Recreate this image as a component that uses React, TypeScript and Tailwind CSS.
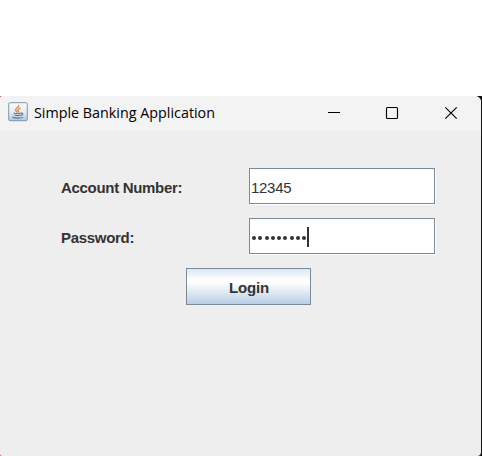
import type { ReactNode } from "react";

function JavaIcon() {
  return (
    <svg width="20" height="20" viewBox="0 0 20 20" className="shrink-0" fill="none">
      <defs>
        <linearGradient id="tile" x1="0" y1="0" x2="0" y2="1">
          <stop offset="0" stopColor="#fbfcfd" />
          <stop offset="0.5" stopColor="#e8edf1" />
          <stop offset="1" stopColor="#b4c9da" />
        </linearGradient>
      </defs>
      <rect x="0.7" y="0.7" width="18.6" height="18" rx="1.5" fill="url(#tile)" stroke="#7f97a9" />
      <path d="M10.8 3C11.5 5.2 6.8 6.2 7.5 8.1C7.9 9 8.8 9.5 9.1 10.6M12.6 5.8C10.5 6.8 9 7.6 10.2 9C10.6 9.6 10.3 10 10 10.6" stroke="#e28a45" strokeWidth="1.4" />
      <path d="M5.6 11.1C7.5 12 11.5 11.8 12.9 11.1M6.6 12.9C8.3 13.7 11 13.6 12.4 12.9M12.9 11.2C15.5 10.6 15.2 12.9 12.8 13.5M4.8 14.5C3.6 16.4 13.7 16.7 14.8 15" stroke="#56799a" strokeWidth="1.15" />
    </svg>
  );
}

function Field({ children }: { children: ReactNode }) {
  return (
    <div className="flex h-9 w-[186px] items-center border border-[#7a8a99] bg-white shadow-[1px_1px_0_#ffffff]">
      {children}
    </div>
  );
}

export default function App() {
  return (
    <div className="h-[456px] w-[482px] overflow-hidden bg-white pt-24 font-['Liberation_Sans',Arial,sans-serif] text-[#333333]">
      <div className="h-[360px] bg-[linear-gradient(90deg,#b54c80_0_8px,#111_8px)] pr-px">
        <div className="h-full overflow-hidden rounded-tl-[3px] rounded-tr-[6px] rounded-br-[4px] rounded-bl-[2px] bg-[#eeeeee]">
          <header className="flex h-[35px] items-center bg-[#f3f3f3] pl-2 text-black">
            <div className="pb-[3px]"><JavaIcon /></div>
            <svg width="200" height="34" className="ml-[6px] shrink-0">
              <text x="0" y="21" textLength="181" lengthAdjust="spacingAndGlyphs" fill="#000" className="font-['Open_Sans','Noto_Sans',sans-serif] text-[15px]">Simple Banking Application</text>
            </svg>
            <svg width="130" height="34" viewBox="0 0 130 34" className="ml-[94px] shrink-0" fill="none" stroke="#000" strokeWidth="1.15">
              <path d="M0 15.5H12" />
              <rect x="58.5" y="10.5" width="11" height="11" rx="1" />
              <path d="M117.3 10.3L128.7 21.7M128.7 10.3L117.3 21.7" />
            </svg>
          </header>
          <main className="flex flex-col pt-[37px]">
            <div className="flex h-9 items-center">
              <label className="ml-[61px] w-[188px] pt-[3px] text-[15px] leading-5 font-bold tracking-[-0.31px]">Account Number:</label>
              <Field><span className="ml-[1px] pt-[3px] text-[15px] leading-5 tracking-[-0.3px]">12345</span></Field>
            </div>
            <div className="mt-[14px] flex h-9 items-center">
              <label className="ml-[61px] w-[188px] pt-[3px] text-[15px] leading-5 font-bold tracking-[-0.31px]">Password:</label>
              <Field>
                <div className="ml-[2px] flex items-center gap-[2.3px] pt-[3px]">
                  {Array.from({ length: 9 }, (_, i) => <span key={i} className="size-1 rounded-full bg-[#333333]" />)}
                </div>
                <div className="mt-[2px] ml-px h-5 w-[2px] bg-[#333333]" />
              </Field>
            </div>
            <button className="mt-[14px] ml-[186px] flex h-[37px] w-[125px] items-center justify-center border border-[#7a8a99] bg-[linear-gradient(#dde8f3_0%,#ffffff_32%,#ffffff_38%,#b8cfe5_100%)] pt-[3px] pl-px text-[15px] leading-5 font-bold tracking-[-0.2px]">Login</button>
          </main>
        </div>
      </div>
    </div>
  );
}
